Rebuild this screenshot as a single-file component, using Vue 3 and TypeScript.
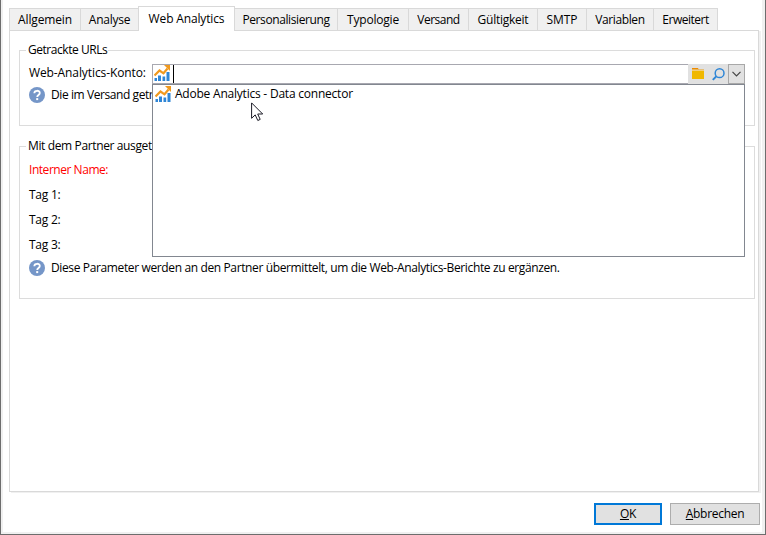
<script setup lang="ts">
import { ref } from 'vue'

interface Tab {
  label: string
  width: number
  spacing: number
}

const tabs: Tab[] = [
  { label: 'Allgemein', width: 71, spacing: -0.15 },
  { label: 'Analyse', width: 58, spacing: -0.25 },
  { label: 'Web Analytics', width: 96, spacing: -0.15 },
  { label: 'Personalisierung', width: 103, spacing: -0.4 },
  { label: 'Typologie', width: 71, spacing: -0.2 },
  { label: 'Versand', width: 60, spacing: -0.5 },
  { label: 'Gültigkeit', width: 69, spacing: -0.25 },
  { label: 'SMTP', width: 49, spacing: -0.1 },
  { label: 'Variablen', width: 67, spacing: -0.4 },
  { label: 'Erweitert', width: 65, spacing: -0.5 },
]
const active = ref(2)
const tags = ['Tag 1:', 'Tag 2:', 'Tag 3:']
</script>

<template>
  <svg class="defs" width="0" height="0" aria-hidden="true">
    <symbol id="chart" viewBox="0 0 16 16">
      <path d="M.5 13H3v3H.5zM4 10.5h3V16H4zM8.5 11.5h2.7V16H8.5zM12.5 7h3v9h-3z" fill="#2f86d6" />
      <path d="M.5 10.5 5.5 5.5l4 2.8L13.5 3.5" fill="none" stroke="#f0991e" stroke-width="2.2" />
      <path d="M10 0h6v6z" fill="#f0991e" />
    </symbol>
    <symbol id="help" viewBox="0 0 16 16">
      <circle cx="8" cy="8" r="8" fill="#7596c8" />
      <path d="M5.3 6.2C5.3 3 10.8 3 10.8 6c0 2-2.6 2-2.6 4" fill="none" stroke="#fff" stroke-width="1.8" />
      <path d="M7.2 11.1h2v2h-2z" fill="#fff" />
    </symbol>
  </svg>
  <div class="window">
    <nav class="tabs">
      <button
        v-for="(tab, i) in tabs"
        :key="tab.label"
        class="tab"
        :class="{ active: i === active }"
        :style="{ width: tab.width + 'px', letterSpacing: tab.spacing + 'px' }"
        @click="active = i"
      >{{ tab.label }}</button>
    </nav>
    <main class="panel">
      <section class="group tracked">
        <h2 class="legend urls">Getrackte URLs</h2>
        <div class="account">
          <label class="account-label">Web-Analytics-Konto:</label>
          <div class="combo">
            <svg class="chart"><use href="#chart" /></svg>
            <span class="caret"></span>
            <span class="tools">
              <svg class="folder" viewBox="0 0 12 11">
                <path d="M0 0h6l1 1.3h5V3H0z" fill="#e8b45a" />
                <path d="M0 0h6v1H0z" fill="#ed8b00" />
                <path d="M0 2h12v1H0z" fill="#f3cf7a" />
                <path d="M0 3h12v8H0z" fill="#f0b800" />
              </svg>
              <svg class="search" viewBox="0 0 13 13">
                <circle cx="7.6" cy="5.2" r="4.4" fill="none" stroke="#2f86d6" stroke-width="1.5" />
                <path d="M4.3 8.4.8 11.9" stroke="#2f86d6" stroke-width="2" />
              </svg>
            </span>
            <span class="arrow">
              <svg viewBox="0 0 9 6"><path d="M.5.8l4 4 4-4" fill="none" stroke="#444" stroke-width="1.2" /></svg>
            </span>
            <div class="dropdown">
              <div class="option">
                <svg class="chart"><use href="#chart" /></svg>
                <span>Adobe Analytics - Data connector</span>
              </div>
            </div>
          </div>
        </div>
        <div class="hint first">
          <svg class="help"><use href="#help" /></svg>
          <span>Die im Versand getr</span>
        </div>
      </section>
      <section class="group partner">
        <h2 class="legend">Mit dem Partner ausget</h2>
        <div class="row required">Interner Name:</div>
        <div v-for="tag in tags" :key="tag" class="row">{{ tag }}</div>
        <div class="hint second">
          <svg class="help"><use href="#help" /></svg>
          <span>Diese Parameter werden an den Partner übermittelt, um die Web-Analytics-Berichte zu ergänzen.</span>
        </div>
      </section>
    </main>
    <footer class="actions">
      <button class="btn ok"><span><u>O</u>K</span></button>
      <button class="btn cancel"><span><u>A</u>bbrechen</span></button>
    </footer>
    <svg class="pointer" viewBox="0 0 13 20">
      <path d="M.6.9v15.4l3.6-3.4 2.6 5.6 2.4-1.1-2.5-5.4h5z" fill="#fff" stroke="#1a1a26" stroke-width="1" />
    </svg>
  </div>
</template>

<style>
body {
  margin: 0;
  background: #fff;
}
</style>

<style scoped>
* {
  box-sizing: border-box;
}
.defs {
  position: absolute;
}
.window {
  position: relative;
  width: 766px;
  height: 535px;
  border: 1px solid #6d6d6d;
  border-top: 0;
  box-shadow: inset 2px 0 #f0f0f0, inset -3px 0 #f0f0f0, inset 0 -2px #f0f0f0;
  padding: 6px 5px 0 8px;
  font: 12px/16px "Open Sans", "Noto Sans", sans-serif;
  letter-spacing: -0.25px;
  color: #000;
  overflow: hidden;
}
.tabs {
  display: flex;
  align-items: flex-end;
  height: 24px;
}
.tab {
  height: 22px;
  padding: 0;
  border: 1px solid #d9d9d9;
  border-right: 0;
  border-bottom: 0;
  background: #f0f0f0;
  font: inherit;
  color: inherit;
  white-space: nowrap;
}
.tab:last-child {
  border-right: 1px solid #d9d9d9;
}
.tab.active {
  height: 25px;
  margin-bottom: -1px;
  padding-bottom: 1px;
  background: #fff;
  position: relative;
}
.tab.active + .tab {
  border-left: 1px solid #d9d9d9;
}
.tab.active::after {
  content: "";
  position: absolute;
  top: -1px;
  right: -1px;
  width: 1px;
  height: 25px;
  background: #d9d9d9;
}
.panel {
  width: 750px;
  height: 462px;
  border: 1px solid #d9d9d9;
  box-shadow: 2px 1px #f0f0f0;
  padding: 19px 3px 0 9px;
}
.group {
  width: 736px;
  border: 1px solid #dcdcdc;
}
.legend {
  width: max-content;
  height: 16px;
  margin: -9px 0 0 6px;
  padding: 0 1px 0 2px;
  background: #fff;
  font: inherit;
  letter-spacing: -0.37px;
}
.legend.urls {
  letter-spacing: -0.46px;
}
.tracked {
  height: 76px;
}
.account {
  display: flex;
  height: 20px;
  margin-top: 6px;
  padding-left: 9px;
}
.account-label {
  width: 123px;
  padding-top: 1px;
  letter-spacing: -0.1px;
  white-space: nowrap;
}
.combo {
  position: relative;
  display: flex;
  width: 593px;
  height: 20px;
  border: 1px solid #a8a8b0;
  background: #fff;
}
.chart {
  flex: none;
  width: 16px;
  height: 16px;
  margin: 0 0 0 1px;
}
.caret {
  width: 1px;
  height: 18px;
  margin-left: 3px;
  background: #000;
}
.tools {
  display: flex;
  width: 40px;
  height: 20px;
  margin: -1px 0 0 auto;
  background: #e1e1e1;
}
.folder {
  width: 12px;
  height: 11px;
  margin: 4px 0 0 4px;
}
.search {
  width: 13px;
  height: 13px;
  margin: 4px 0 0 8px;
}
.arrow {
  display: flex;
  align-items: center;
  justify-content: center;
  width: 17px;
  height: 20px;
  margin: -1px -1px 0 0;
  border: 1px solid #a8a8a8;
  background: #e1e1e1;
}
.arrow svg {
  width: 9px;
  height: 6px;
}
.dropdown {
  position: absolute;
  z-index: 2;
  top: 19px;
  left: -1px;
  width: 593px;
  height: 173px;
  border: 1px solid #828790;
  background: #fff;
}
.option {
  display: flex;
  margin: 1px 0 0 1px;
}
.option span {
  margin-left: 4px;
  letter-spacing: -0.22px;
  white-space: nowrap;
}
.hint {
  display: flex;
  align-items: center;
  height: 16px;
  padding-left: 9px;
  white-space: nowrap;
}
.hint span {
  margin-left: 6px;
  letter-spacing: -0.37px;
}
.help {
  flex: none;
  width: 16px;
  height: 16px;
}
.hint.first {
  margin-top: 3px;
}
.hint.first span {
  letter-spacing: -0.42px;
}
.partner {
  height: 153px;
  margin-top: 20px;
}
.row {
  height: 25px;
  padding-left: 9px;
}
.required {
  margin-top: 8px;
  letter-spacing: -0.46px;
  color: #f00;
}
.hint.second {
  margin-top: -2px;
}
.actions {
  display: flex;
  justify-content: flex-end;
  gap: 8px;
  margin-top: 11px;
}
.btn {
  height: 22px;
  padding: 0;
  border: 1px solid #adadad;
  background: #e1e1e1;
  font: inherit;
  letter-spacing: -0.3px;
  color: inherit;
}
.ok {
  width: 68px;
  border: 2px solid #0078d7;
}
.cancel {
  width: 90px;
}
.pointer {
  position: absolute;
  z-index: 3;
  left: 250px;
  top: 102px;
  width: 13px;
  height: 20px;
}
</style>
